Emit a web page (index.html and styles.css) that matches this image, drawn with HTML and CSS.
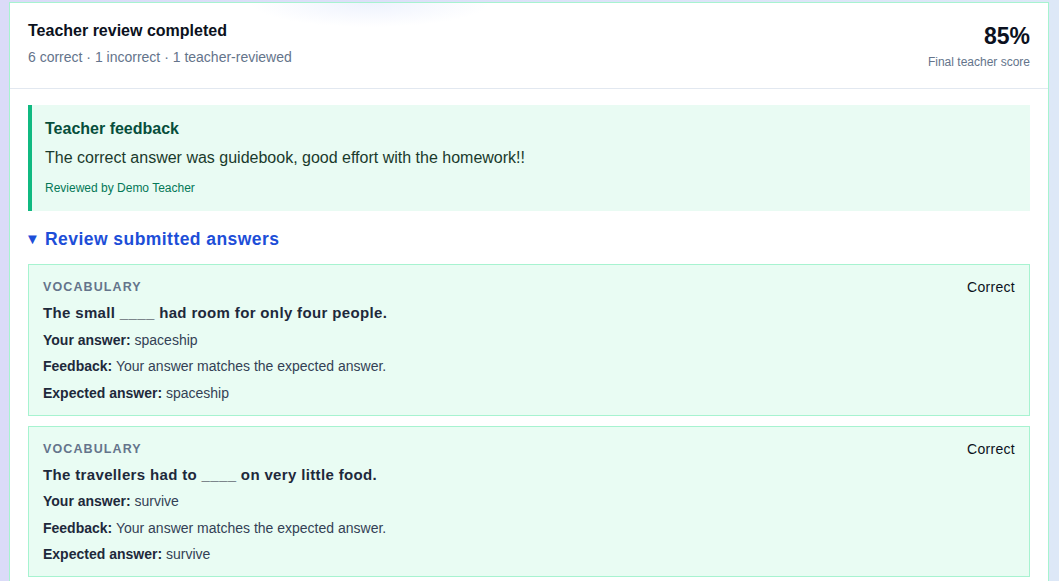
FILE: index.html
```html
<!DOCTYPE html>
<html lang="en">
<head>
<meta charset="utf-8">
<title>Teacher review</title>
<link rel="stylesheet" href="styles.css">
</head>
<body>
<main class="page">
  <section class="card">
    <header class="card-head">
      <div class="head-left">
        <h1 class="title">Teacher review completed</h1>
        <p class="summary">6 correct · 1 incorrect · 1 teacher-reviewed</p>
      </div>
      <div class="score">
        <div class="score-value">85%</div>
        <div class="score-label">Final teacher score</div>
      </div>
    </header>
    <div class="card-body">
      <div class="teacher-feedback">
        <h2 class="tf-title">Teacher feedback</h2>
        <p class="tf-text">The correct answer was guidebook, good effort with the homework!!</p>
        <p class="tf-by">Reviewed by Demo Teacher</p>
      </div>
      <details class="answers" open>
        <summary class="answers-toggle">Review submitted answers</summary>
        <div class="answer-list">
          <article class="answer">
            <div class="answer-main">
              <div class="answer-type">Vocabulary</div>
              <div class="answer-q">The small ____ had room for only four people.</div>
              <div class="answer-row"><b>Your answer:</b> spaceship</div>
              <div class="answer-row"><b>Feedback:</b> Your answer matches the expected answer.</div>
              <div class="answer-row"><b>Expected answer:</b> spaceship</div>
            </div>
            <div class="answer-status">Correct</div>
          </article>
          <article class="answer">
            <div class="answer-main">
              <div class="answer-type">Vocabulary</div>
              <div class="answer-q">The travellers had to ____ on very little food.</div>
              <div class="answer-row"><b>Your answer:</b> survive</div>
              <div class="answer-row"><b>Feedback:</b> Your answer matches the expected answer.</div>
              <div class="answer-row"><b>Expected answer:</b> survive</div>
            </div>
            <div class="answer-status">Correct</div>
          </article>
        </div>
      </details>
    </div>
  </section>
</main>
</body>
</html>
```

FILE: styles.css
```css
* { box-sizing: border-box; }
html, body { margin: 0; height: 100%; }
body {
  font-family: "Liberation Sans", Arial, sans-serif;
  background: linear-gradient(90deg, #dbdbf8 0%, #dde3f8 60%, #dde8f7 100%);
  overflow: hidden;
  color: #0f172a;
}
.page {
  padding: 2px 10px 0 9px;
}
.card {
  background:
    radial-gradient(ellipse 120px 24px at 360px 0px, rgba(224, 232, 252, 0.55), rgba(255,255,255,0) 100%),
    #ffffff;
  border: 1px solid #a7f3d0;
  border-bottom: none;
  min-height: 620px;
}
.card-head {
  display: flex;
  justify-content: space-between;
  align-items: flex-start;
  padding: 18px 18px 0 18px;
  height: 86px;
  border-bottom: 1px solid #e2e8f0;
}
.title {
  margin: 0;
  font-size: 16px;
  font-weight: 700;
  color: #0b1120;
  line-height: 20px;
}
.summary {
  margin: 6px 0 0;
  font-size: 14px;
  color: #64748b;
  line-height: 20px;
}
.score { text-align: right; }
.score-value {
  font-size: 23px;
  font-weight: 700;
  color: #0b1120;
  line-height: 28px;
  margin-top: 1px;
}
.score-label {
  margin-top: 4px;
  font-size: 12px;
  color: #64748b;
  line-height: 16px;
}
.card-body {
  padding: 16px 18px 0 18px;
}
.teacher-feedback {
  background: #e9fbf3;
  border-left: 4px solid #10b981;
  padding: 14px 14px 15px 13px;
}
.tf-title {
  margin: 0;
  font-size: 16px;
  font-weight: 700;
  color: #064e3b;
  line-height: 20px;
}
.tf-text {
  margin: 9px 0 0;
  font-size: 16px;
  color: #1a3a2c;
  line-height: 20px;
}
.tf-by {
  margin: 12px 0 0;
  font-size: 12px;
  color: #047857;
  line-height: 16px;
}
.answers { margin-top: 17px; }
.answers-toggle {
  font-size: 17.5px;
  font-weight: 700;
  color: #1d4ed8;
  line-height: 22px;
  cursor: pointer;
  list-style: none;
  letter-spacing: 0.45px;
}
.answers-toggle::-webkit-details-marker { display: none; }
.answers-toggle::before {
  content: "▼";
  font-size: 15px;
  display: inline-block;
  width: 20px;
  margin-left: -3px;
  vertical-align: 1px;
  letter-spacing: 0;
}
.answer-list {
  margin-top: 14px;
  display: flex;
  flex-direction: column;
  gap: 10px;
}
.answer {
  display: flex;
  justify-content: space-between;
  align-items: flex-start;
  background: #e9fcf3;
  border: 1px solid #a7f3d0;
  padding: 14px 14px 12px 14px;
}
.answer-type {
  font-size: 12.5px;
  font-weight: 700;
  letter-spacing: 1.1px;
  text-transform: uppercase;
  color: #64748b;
  line-height: 16px;
}
.answer-q {
  margin-top: 8px;
  font-size: 15px;
  font-weight: 700;
  color: #1e293b;
  line-height: 20px;
  letter-spacing: 0.35px;
}
.answer-row {
  margin-top: 6.5px;
  font-size: 14px;
  color: #334155;
  line-height: 20px;
}
.answer-row b { color: #1e293b; }
.answer-status {
  font-size: 14px;
  color: #0b1120;
  line-height: 16px;
  margin-top: 0px;
  letter-spacing: 0.3px;
}
```
